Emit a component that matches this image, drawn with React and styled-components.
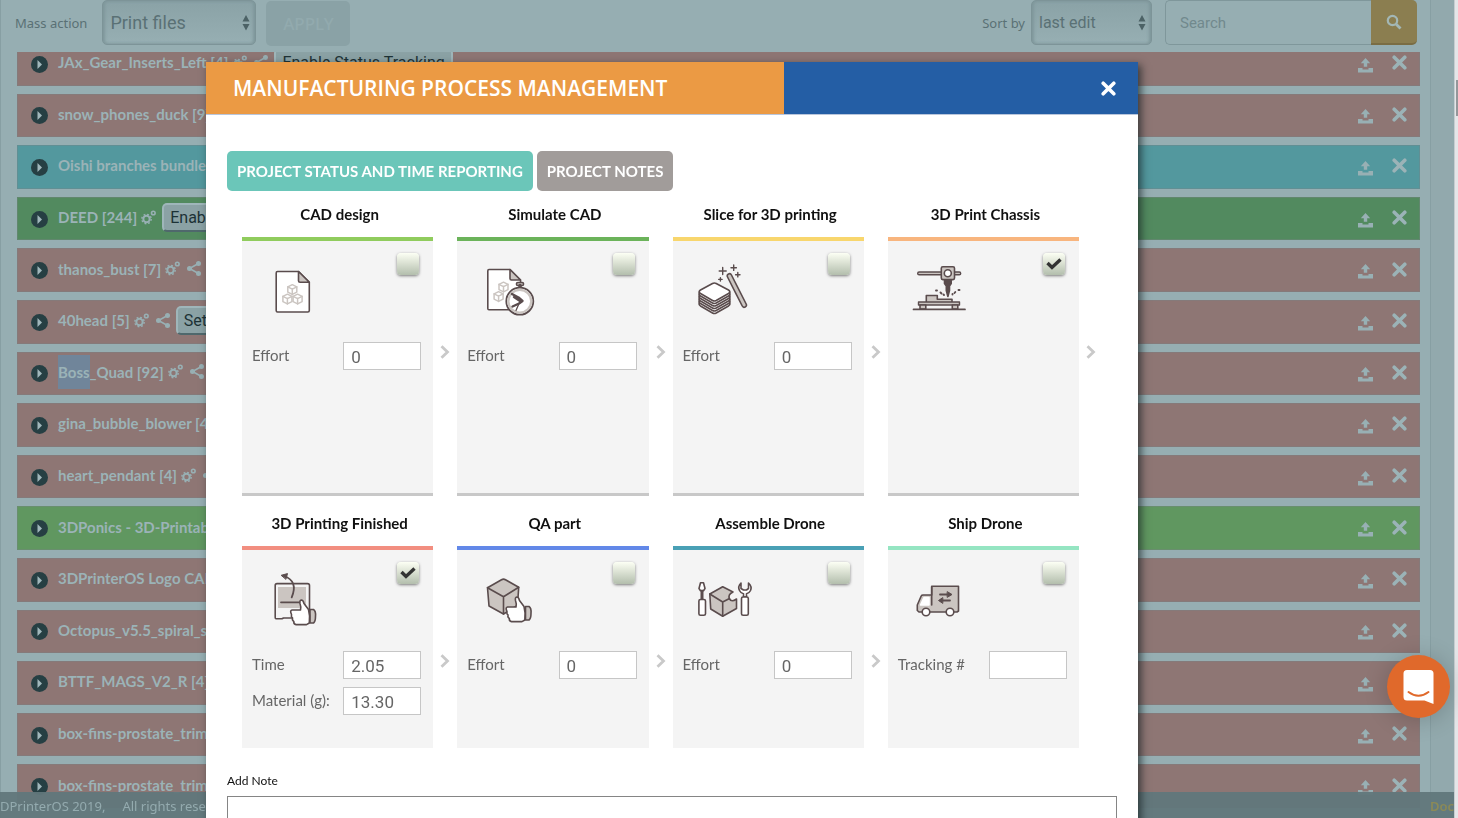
import React, { useState } from "react";
import styled, { createGlobalStyle } from "styled-components";

const GlobalStyle = createGlobalStyle`
  * {
    box-sizing: border-box;
  }
  body {
    margin: 0;
    background: #92a9ad;
    font-family: Lato, "Liberation Sans", sans-serif;
    overflow: hidden;
  }
  button, input, select, textarea {
    font-family: inherit;
    margin: 0;
  }
`;

const Page = styled.div`
  display: flex;
  height: 100vh;
  overflow: hidden;
`;

const Panel = styled.main`
  flex: 1;
  min-width: 0;
  background: #96aeb2;
  border: solid #879fa3;
  border-width: 0 1px;
`;

const Gutter = styled.div`
  width: 23px;
`;

const ScrollTrack = styled.div`
  width: 4px;
  padding-top: 80px;
  background: #e4e6e8;
  border-left: 1px solid #c6cdd0;
`;

const ScrollThumb = styled.div`
  height: 36px;
  margin-left: 1px;
  background: #94979a;
`;

const Toolbar = styled.div`
  position: relative;
  z-index: 1;
  display: flex;
  align-items: flex-start;
  height: 52px;
  padding: 0 13px 0 14px;
  background: #96aeb2;
  color: #5a7175;
`;

const ToolLabel = styled.label`
  font: 13px/46px "Noto Sans", sans-serif;
  margin-right: ${(props) => props.$gap}px;
`;

const SelectWrap = styled.div`
  position: relative;
  width: ${(props) => props.$width}px;
  svg {
    position: absolute;
    right: 6px;
    top: 15px;
    pointer-events: none;
  }
`;

const Select = styled.select`
  width: 100%;
  height: 45px;
  padding: 0 7px;
  appearance: none;
  border: 1px solid #7d9498;
  border-radius: 5px;
  background: linear-gradient(#8aa2a6, #97afb3);
  box-shadow: inset 2px 0 3px #7f979b, inset -2px 0 3px #7f979b;
  color: #5a7175;
  font: ${(props) => props.$size}px Roboto, sans-serif;
`;

const ApplyButton = styled.button`
  width: 84px;
  height: 45px;
  margin: 1px auto 0 10px;
  border: 0;
  border-radius: 5px;
  background: #8aa2a6;
  color: #92aaae;
  font: 500 17px "Noto Sans", sans-serif;
`;

const SearchInput = styled.input`
  width: 206px;
  height: 45px;
  margin-left: 13px;
  padding: 0 14px;
  border: 1px solid #7f979b;
  border-right: 0;
  border-radius: 5px 0 0 5px;
  background: #96aeb2;
  font: 15px Roboto, sans-serif;
  &::placeholder {
    color: #71898d;
    opacity: 1;
  }
`;

const SearchButton = styled.button`
  display: flex;
  align-items: center;
  justify-content: center;
  width: 46px;
  height: 45px;
  padding: 0;
  border: 0;
  border-bottom: 2px solid #7a6d44;
  border-radius: 0 5px 5px 0;
  background: #8b7e50;
`;

const FileList = styled.ul`
  display: grid;
  grid-auto-rows: 1fr;
  gap: 8px;
  height: calc(100vh - 52px);
  margin: -10px 10px 0 16px;
  padding: 0;
  list-style: none;
`;

const FileRow = styled.li`
  display: flex;
  align-items: center;
  min-height: 0;
  padding: 0 12px 0 13px;
  border: 1px solid rgba(120, 130, 132, 0.4);
  background: ${(props) => props.$color};
`;

const PlayButton = styled.button`
  display: flex;
  margin: 1px 10px 0 0;
  padding: 0;
  border: 0;
  background: none;
`;

const FileName = styled.span`
  padding-bottom: 3px;
  color: #9bb3b7;
  font-size: 15px;
  font-weight: 700;
  white-space: nowrap;
  margin-right: 4px;
`;

const Selected = styled.span`
  display: inline-block;
  padding: 8px 0;
  background: #70859a;
`;

const RowIcons = styled.span`
  display: flex;
  gap: 7px;
  margin-right: 6px;
  padding-bottom: 3px;
`;

const RowAction = styled.button`
  height: 29px;
  margin-bottom: 3px;
  padding: 0 6px;
  border: 2px solid #9fb6ba;
  border-bottom-color: #4f686c;
  border-radius: 5px;
  background: #8ba2a5;
  color: #1d3236;
  font: 16px Roboto, sans-serif;
  white-space: nowrap;
`;

const RowTools = styled.div`
  display: flex;
  align-items: center;
  gap: 19px;
  margin-left: auto;
  padding-bottom: 2px;
`;

const ToolButton = styled.button`
  display: flex;
  padding: ${(props) => (props.$low ? "5px 0 0" : "0")};
  border: 0;
  background: none;
`;

const Footer = styled.footer`
  position: fixed;
  left: 0;
  right: 4px;
  bottom: 0;
  display: flex;
  gap: 17px;
  height: 26px;
  overflow: hidden;
  background: rgba(97, 119, 123, 0.95);
  color: #94abaf;
  font: 13px/28px "Noto Sans", sans-serif;
  white-space: nowrap;
`;

const DocLink = styled.a`
  margin-left: auto;
  color: #8b8a57;
  font-weight: 600;
  text-decoration: none;
`;

const Overlay = styled.div`
  position: fixed;
  inset: 0;
  z-index: 2;
  display: flex;
  padding: 62px 320px 0 206px;
  overflow: hidden;
`;

const Modal = styled.section`
  flex: 1;
  min-width: 0;
  align-self: flex-start;
  background: #fff;
  box-shadow: 3px 3px 8px rgba(20, 30, 32, 0.7);
`;

const ModalHeader = styled.header`
  display: grid;
  grid-template-columns: 62% 1fr;
  height: 53px;
  border-bottom: 1px solid #b9c6dc;
`;

const ModalTitle = styled.h1`
  margin: 0;
  padding-left: 27px;
  background: #eb9a44;
  color: #fff;
  font: 600 21px/52px "Open Sans", sans-serif;
  white-space: nowrap;
`;

const CloseBar = styled.div`
  display: flex;
  align-items: center;
  justify-content: flex-end;
  padding-right: 22px;
  background: #245ea5;
`;

const CloseButton = styled.button`
  display: flex;
  padding: 0;
  border: 0;
  background: none;
`;

const ModalBody = styled.div`
  padding: 36px 21px 40px;
`;

const Tabs = styled.div`
  display: flex;
  gap: 4px;
`;

const Tab = styled.button`
  height: 40px;
  padding: 0 10px;
  border: 0;
  border-radius: 5px;
  background: ${(props) => (props.$active ? "#6bc6b9" : "#a19c9a")};
  color: #fff;
  font-size: 15px;
  font-weight: 700;
  white-space: nowrap;
`;

const Steps = styled.div`
  display: grid;
  grid-template-columns: repeat(4, 1fr);
  row-gap: 4px;
  padding: 0 14px 0 15px;
`;

const Step = styled.div`
  display: grid;
  grid-template-columns: 1fr 24px;
  grid-template-rows: 46px 1fr;
`;

const StepTitle = styled.h2`
  margin: 0;
  padding: 1px 0 0 4px;
  color: #111;
  font-size: 15px;
  font-weight: 700;
  line-height: 45px;
  text-align: center;
`;

const Card = styled.div`
  grid-row: 2;
  min-height: ${(props) => (props.$tall ? 259 : 202)}px;
  padding: 0 12px 0 10px;
  border-top: 4px solid ${(props) => props.$color};
  border-bottom: ${(props) => (props.$tall ? "3px solid #c8c8c8" : "0")};
  background: #f4f4f4;
`;

const CardHead = styled.div`
  display: flex;
  justify-content: space-between;
  align-items: flex-start;
  height: 101px;
  padding: 12px 2px 0 10px;
  svg {
    margin-top: 10px;
  }
`;

const Tick = styled.label`
  position: relative;
  display: flex;
  input {
    appearance: none;
    width: 22px;
    height: 22px;
    border-radius: 4px;
    background: linear-gradient(#fcfff4, #dfe5d7 40%, #b3bead);
    box-shadow: 0 1px 3px rgba(0, 0, 0, 0.5);
  }
  svg {
    position: absolute;
    left: 3px;
    top: 5px;
    margin: 0;
    opacity: 0;
    pointer-events: none;
  }
  input:checked + svg {
    opacity: 1;
  }
`;

const Field = styled.label`
  display: flex;
  align-items: center;
  justify-content: space-between;
  margin-bottom: 8px;
  color: #666;
  font-size: 15px;
  line-height: 26px;
  align-items: flex-start;
`;

const FieldInput = styled.input`
  width: 78px;
  height: 28px;
  padding: 2px 7px 0;
  border: 1px solid #c6c6c6;
  background: #fff;
  color: #666;
  font: 17px Roboto, sans-serif;
`;

const Arrow = styled.div`
  grid-row: 2;
  grid-column: 2;
  display: flex;
  justify-content: center;
  padding-top: 108px;
`;

const NoteLabel = styled.label`
  display: block;
  margin-top: 23px;
  color: #111;
  font-size: 12px;
  line-height: 20px;
`;

const Note = styled.textarea`
  display: block;
  width: 100%;
  height: 110px;
  margin-top: 5px;
  border: 1px solid #858585;
  resize: none;
`;

const ChatButton = styled.button`
  position: fixed;
  right: 8px;
  bottom: 100px;
  z-index: 3;
  display: flex;
  align-items: center;
  justify-content: center;
  width: 63px;
  height: 63px;
  padding: 0;
  border: 0;
  border-radius: 50%;
  background: #e0692b;
  box-shadow: 0 2px 24px rgba(0, 0, 0, 0.2);
`;

const DARK = "#5a4c4d";
const TAUPE = "#cbc5c1";

const RED = "#8e7674";

const files = [
  { name: "JAx_Gear_Inserts_Left [4]", color: RED, gears: true, share: true, action: "Enable Status Tracking" },
  { name: "snow_phones_duck [9]", color: RED },
  { name: "Oishi branches bundle", color: "#53989e" },
  { name: "DEED [244]", color: "#528a5f", gears: true, action: "Enable" },
  { name: "thanos_bust [7]", color: RED, gears: true, share: true },
  { name: "40head [5]", color: RED, gears: true, share: true, action: "Set" },
  { name: "_Quad [92]", selected: "Boss", color: RED, gears: true, share: true },
  { name: "gina_bubble_blower [4]", color: RED },
  { name: "heart_pendant [4]", color: RED, gears: true, share: true },
  { name: "3DPonics - 3D-Printable", color: "#609760" },
  { name: "3DPrinterOS Logo CAD", color: RED },
  { name: "Octopus_v5.5_spiral_s", color: RED },
  { name: "BTTF_MAGS_V2_R [4]", color: RED, gears: true },
  { name: "box-fins-prostate_trim-", color: RED },
  { name: "box-fins-prostate_trim-", color: RED },
];

const UpDown = () => (
  <svg width="8" height="16" viewBox="0 0 8 16" fill="#4c6266">
    <path d="M4 0 7.500 6.500H.500zM4 15.500.500 9H7.500z" />
  </svg>
);

const Cross = ({ color }) => (
  <svg width="15" height="15" viewBox="0 0 15 15" stroke={color} strokeWidth="3.600" strokeLinecap="round">
    <path d="M2.200 2.200 12.800 12.800M12.800 2.200 2.200 12.800" />
  </svg>
);

const Play = () => (
  <svg width="17" height="17" viewBox="0 0 17 17">
    <circle cx="8.500" cy="8.500" r="8.500" fill="#263f43" />
    <path d="M6.500 4v9L11 8.500z" fill="#a0b7bb" />
  </svg>
);

const Upload = () => (
  <svg width="15" height="15" viewBox="0 0 15 15" fill="#98b0b4">
    <path d="M7.500 0 12.200 5.200H9.200V8.800H5.800V5.200H2.800z" />
    <path d="M0 10H4.500V11.500H10.500V10H15V14.500H0z" />
  </svg>
);

const Gears = () => (
  <svg width="15" height="15" viewBox="0 0 15 15" fill="none" stroke="#98b0b4">
    <circle cx="5.500" cy="9" r="3.200" strokeWidth="2" />
    <circle cx="5.500" cy="9" r="4.700" strokeWidth="1.400" strokeDasharray="1.850 1.850" />
    <circle cx="12.300" cy="3" r="1.800" strokeWidth="1.600" />
  </svg>
);

const Share = () => (
  <svg width="14" height="15" viewBox="0 0 14 15" fill="#98b0b4" stroke="#98b0b4" strokeWidth="1.600">
    <path d="M11.500 2.500 2.500 7.500 11.500 12.500" fill="none" />
    <circle cx="11.500" cy="2.500" r="1.700" />
    <circle cx="2.500" cy="7.500" r="1.700" />
    <circle cx="11.500" cy="12.500" r="1.700" />
  </svg>
);

const CheckMark = () => (
  <svg width="16" height="12" viewBox="0 0 16 12" fill="none" stroke="#333" strokeWidth="3.400">
    <path d="M1.500 5 6 9.500 14.500 1.500" />
  </svg>
);

const Chevron = () => (
  <svg width="10" height="14" viewBox="0 0 10 14" fill="none" stroke="#c9c9c9" strokeWidth="2.800">
    <path d="M1.500 1.200 7.500 7 1.500 12.800" />
  </svg>
);

const Drawing = ({ children }) => (
  <svg
    width="64"
    height="64"
    viewBox="0 0 64 64"
    fill="#fff"
    stroke={DARK}
    strokeWidth="1.600"
    strokeLinejoin="round"
    strokeLinecap="round"
  >
    {children}
  </svg>
);

const TinyCube = ({ x, y }) => (
  <g transform={`translate(${x} ${y})`} stroke={TAUPE} strokeWidth="1.500">
    <path d="M0-4.800 4.500-2.600V2.600L0 4.900-4.500 2.600V-2.600z" />
    <path d="M-4.500-2.600 0-.400 4.500-2.600M0-.400V4.900" fill="none" />
  </g>
);

const Hand = () => (
  <g>
    <path d="M48 37.500H51.500Q54 39 53.500 44.500 53.500 49.500 51.500 51H48z" fill={TAUPE} />
    <path d="M30 38H38.500Q39.300 35 38 31.500 37.400 28.300 39.300 28 41.200 28 42 31.500L46.500 37.500Q48.300 44 47.300 51L44.500 52.600H34Q31.600 52.400 31.800 49.500 30 48.500 30.500 46 28.900 45 29.500 42.500 27.600 38.500 30 38z" />
  </g>
);

const drawings = {
  cad: (
    <Drawing>
      <path d="M15.500 8.500H36.500L47.300 19.300V47.500Q47.300 49 45.800 49H15.500Q14.200 49 14.200 47.500V10Q14.200 8.500 15.500 8.500z" />
      <path d="M36.500 8.500V17.800Q36.500 19.300 38 19.300H47.300z" fill={TAUPE} />
      <TinyCube x={30.300} y={26.500} />
      <TinyCube x={25.400} y={36} />
      <TinyCube x={35.600} y={36} />
    </Drawing>
  ),
  simulate: (
    <Drawing>
      <path d="M12 6.500H33L43.500 17V45.500Q43.500 46.800 42 46.800H12Q10.800 46.800 10.800 45.500V8Q10.800 6.500 12 6.500z" />
      <path d="M33 6.500V15.500Q33 17 34.500 17H43.500z" fill={TAUPE} />
      <TinyCube x={26.500} y={24} />
      <TinyCube x={21.600} y={33.500} />
      <rect x="39.500" y="19.500" width="7" height="3" rx="1.300" fill={TAUPE} />
      <path d="M43 22.500V25" strokeWidth="3.500" />
      <circle cx="42.800" cy="38.200" r="13.500" strokeWidth="1.800" />
      <circle cx="42.800" cy="38.200" r="11.400" stroke={TAUPE} strokeWidth="2.200" />
      <path d="M35 31 41.500 34.500 45.500 38 42 40.500 35.500 43.500M37 34 43 38" fill="none" strokeWidth="2.400" />
      <path d="M42 40.500 39 47.500" strokeWidth="1.300" />
    </Drawing>
  ),
  slice: (
    <Drawing>
      {[12.500, 10, 7.500, 5, 2.500, 0].map((dy) => (
        <path
          key={dy}
          transform={`translate(0 ${dy})`}
          d="M19.500 20.500Q21.300 19.500 23.200 20.500L35.500 27Q38 28.500 35.500 30.500L23.200 37.500Q21.300 38.500 19.500 37.500L7.500 30.500Q5 28.500 7.500 27z"
        />
      ))}
      <path d="M6.200 29V41M36.800 29V41" strokeWidth="1.400" />
      <path d="M36.500 13 51.200 42" strokeWidth="6" />
      <path d="M36.500 13 51.200 42" stroke={TAUPE} strokeWidth="2.800" />
      <path d="M29.700 4.500V11.500M26.200 8H33.200M40.700 2V7.400M38 4.700H43.400M44.800 9.500V13.900M42.600 11.700H47M27.400 14.700V18.100M25.700 16.400H29.100" strokeWidth="1.400" />
    </Drawing>
  ),
  print: (
    <Drawing>
      <rect x="9.700" y="9" width="43" height="2.800" rx="1.400" fill={TAUPE} strokeWidth="1.400" />
      <rect x="33.300" y="3.800" width="13.200" height="12.800" rx="1.500" fill={TAUPE} />
      <circle cx="39.800" cy="10.300" r="3.500" />
      <path d="M36.500 17.500H43.200V20.500L41.500 23V27.500L39.900 33.500 38.300 27.500V23L36.500 20.500z" fill={DARK} />
      <path d="M28 27.500H29M32.500 29.500 33.500 30.500M46.500 30 47.300 29M50.500 27H51.500M44.500 31.500V31M35.500 31.500 36 32" strokeWidth="1.900" />
      <path d="M18.300 39V32.500H29.300V36.300H44V39" fill={TAUPE} />
      <rect x="10.500" y="39" width="41" height="3" fill={TAUPE} strokeWidth="1.400" />
      <path d="M12 42H17.800V46H12zM44.300 42H49.800V46H44.300z" fill={TAUPE} />
      <path d="M5.500 46.400H57" strokeWidth="1.700" />
    </Drawing>
  ),
  finished: (
    <Drawing>
      <path d="M15 11.600H45.500Q47.500 11.600 47.500 13.500V46H21.500L20 46.800H14Q13.200 46.800 13.200 45.500V13.500Q13.200 11.600 15 11.600z" fill="#f4f4f4" />
      <path d="M16 15H44V36H16z" fill={TAUPE} stroke="none" />
      <path d="M19 30.300H39M29.700 25.300Q36.500 9 22 4" fill="none" strokeWidth="1.800" />
      <path d="M19.500 3.200 25.500 1.600 24 7z" fill={DARK} strokeWidth="1" />
      <Hand />
    </Drawing>
  ),
  qa: (
    <Drawing>
      <path d="M24.500 7.700Q26.500 6.500 28.500 7.700L41.700 15.300 40.500 33.500 26.500 42 12 34 10.500 15.700z" fill={TAUPE} />
      <path d="M10.500 15.700 26.500 24.700 41.700 15.300M26.500 24.700V42" fill="none" />
      <g transform="translate(0.500 -3)">
        <Hand />
      </g>
    </Drawing>
  ),
  assemble: (
    <Drawing>
      <path d="M7.500 10.700H10.500L12 16.500 10.500 18.700H7.500L6 16.500z" />
      <path d="M9 19V27" strokeWidth="3" />
      <rect x="5.900" y="27.500" width="6.600" height="15.800" rx="1.600" />
      <path d="M16.800 22 29.700 14.700 40 20Q34.500 22.500 36.500 27 38.500 30.500 43.500 27V36.500L29.700 44.300 17.700 37z" fill={TAUPE} />
      <path d="M16.800 22 29.700 30 36.500 26.500M29.700 30V44" fill="none" />
      <path d="M48 11Q44.500 14.500 46.500 18.500 48 21.500 50.500 21.800V25H53.500V21.800Q56 21.500 57.500 18.500 59.300 14.500 55.500 11V16.500L53.500 18H50.500L48 16.500z" />
      <rect x="48.500" y="25" width="6.800" height="18.300" rx="1.600" />
    </Drawing>
  ),
  ship: (
    <Drawing>
      <path d="M23.700 14.200H50.500V39L49 40H11L9.300 38.500V33L13.200 24Q13.700 23 15 23H23.700z" fill={TAUPE} />
      <path d="M16 25.500H21V33H12.500z" stroke="#fff" />
      <path d="M23.700 15V33" />
      <path d="M32 22.500H41M33 28.500H42" strokeWidth="1.800" />
      <path d="M39.500 19.800 44 22.500 39.500 25.200zM34.500 25.800 30.500 28.500 34.500 31.200z" fill={DARK} strokeWidth="1" />
      <circle cx="18" cy="40" r="3.800" />
      <circle cx="42" cy="40" r="3.800" />
    </Drawing>
  ),
};

const effort = [{ label: "Effort", value: "0" }];

const steps = [
  { title: "CAD design", icon: "cad", color: "#90cc5d", fields: effort, tall: true, next: true },
  { title: "Simulate CAD", icon: "simulate", color: "#6bb35a", fields: effort, tall: true, next: true },
  { title: "Slice for 3D printing", icon: "slice", color: "#f8d66d", fields: effort, tall: true, next: true },
  { title: "3D Print Chassis", icon: "print", color: "#f8b57e", fields: [], tall: true, next: true, done: true },
  {
    title: "3D Printing Finished",
    icon: "finished",
    color: "#f28e80",
    fields: [
      { label: "Time", value: "2.05" },
      { label: "Material (g):", value: "13.30" },
    ],
    next: true,
    done: true,
  },
  { title: "QA part", icon: "qa", color: "#6288e8", fields: effort, next: true },
  { title: "Assemble Drone", icon: "assemble", color: "#49a0b5", fields: effort, next: true },
  { title: "Ship Drone", icon: "ship", color: "#95e5c2", fields: [{ label: "Tracking #", value: "" }] },
];

function ProcessStep({ step }) {
  return (
    <Step>
      <StepTitle>{step.title}</StepTitle>
      <Card $color={step.color} $tall={step.tall}>
        <CardHead>
          {drawings[step.icon]}
          <Tick>
            <input type="checkbox" aria-label={step.title} defaultChecked={step.done} />
            <CheckMark />
          </Tick>
        </CardHead>
        {step.fields.map((field) => (
          <Field key={field.label}>
            {field.label}
            <FieldInput type="text" defaultValue={field.value} />
          </Field>
        ))}
      </Card>
      {step.next && (
        <Arrow>
          <Chevron />
        </Arrow>
      )}
    </Step>
  );
}

function File({ file }) {
  return (
    <FileRow $color={file.color}>
      <PlayButton aria-label="Expand">
        <Play />
      </PlayButton>
      <FileName>
        {file.selected && <Selected>{file.selected}</Selected>}
        {file.name}
      </FileName>
      {file.gears && (
        <RowIcons>
          <Gears />
          {file.share && <Share />}
        </RowIcons>
      )}
      {file.action && <RowAction>{file.action}</RowAction>}
      <RowTools>
        <ToolButton aria-label="Upload" $low>
          <Upload />
        </ToolButton>
        <ToolButton aria-label="Delete">
          <Cross color="#9bb3b7" />
        </ToolButton>
      </RowTools>
    </FileRow>
  );
}

function App() {
  const [tab, setTab] = useState("status");

  return (
    <>
      <GlobalStyle />
      <Page>
        <Panel>
          <Toolbar>
            <ToolLabel htmlFor="mass" $gap={15}>
              Mass action
            </ToolLabel>
            <SelectWrap $width={154}>
              <Select id="mass" $size={18}>
                <option>Print files</option>
              </Select>
              <UpDown />
            </SelectWrap>
            <ApplyButton>APPLY</ApplyButton>
            <ToolLabel htmlFor="sort" $gap={6}>
              Sort by
            </ToolLabel>
            <SelectWrap $width={121}>
              <Select id="sort" $size={16}>
                <option>last edit</option>
              </Select>
              <UpDown />
            </SelectWrap>
            <SearchInput type="search" placeholder="Search" aria-label="Search" />
            <SearchButton aria-label="Search">
              <svg width="16" height="16" viewBox="0 0 16 16" fill="none" stroke="#a3b7b5">
                <circle cx="6.500" cy="6.500" r="4.700" strokeWidth="2.200" />
                <path d="M10.200 10.200 14.500 14.500" strokeWidth="2.800" />
              </svg>
            </SearchButton>
          </Toolbar>
          <FileList>
            {files.map((file, i) => (
              <File key={i} file={file} />
            ))}
          </FileList>
        </Panel>
        <Gutter />
        <ScrollTrack>
          <ScrollThumb />
        </ScrollTrack>
      </Page>
      <Footer>
        <span>DPrinterOS 2019,</span>
        <span>All rights reserved</span>
        <DocLink href="#">Doc</DocLink>
      </Footer>
      <Overlay>
        <Modal role="dialog" aria-labelledby="title">
          <ModalHeader>
            <ModalTitle id="title">MANUFACTURING PROCESS MANAGEMENT</ModalTitle>
            <CloseBar>
              <CloseButton aria-label="Close">
                <Cross color="#fff" />
              </CloseButton>
            </CloseBar>
          </ModalHeader>
          <ModalBody>
            <Tabs>
              <Tab $active={tab === "status"} onClick={() => setTab("status")}>
                PROJECT STATUS AND TIME REPORTING
              </Tab>
              <Tab $active={tab === "notes"} onClick={() => setTab("notes")}>
                PROJECT NOTES
              </Tab>
            </Tabs>
            <Steps>
              {steps.map((step) => (
                <ProcessStep key={step.title} step={step} />
              ))}
            </Steps>
            <NoteLabel htmlFor="note">Add Note</NoteLabel>
            <Note id="note" />
          </ModalBody>
        </Modal>
      </Overlay>
      <ChatButton aria-label="Open chat">
        <svg width="31" height="36" viewBox="0 0 31 36">
          <path d="M4 1H27Q30.500 1 30.500 4.500V35L21.500 31.500H4Q.500 31.500 .500 28V4.500Q.500 1 4 1z" fill="#fff" />
          <path d="M5.500 23Q15.500 30.500 25.500 23" fill="none" stroke="#e0692b" strokeWidth="2" strokeLinecap="round" />
        </svg>
      </ChatButton>
    </>
  );
}

export default App;
